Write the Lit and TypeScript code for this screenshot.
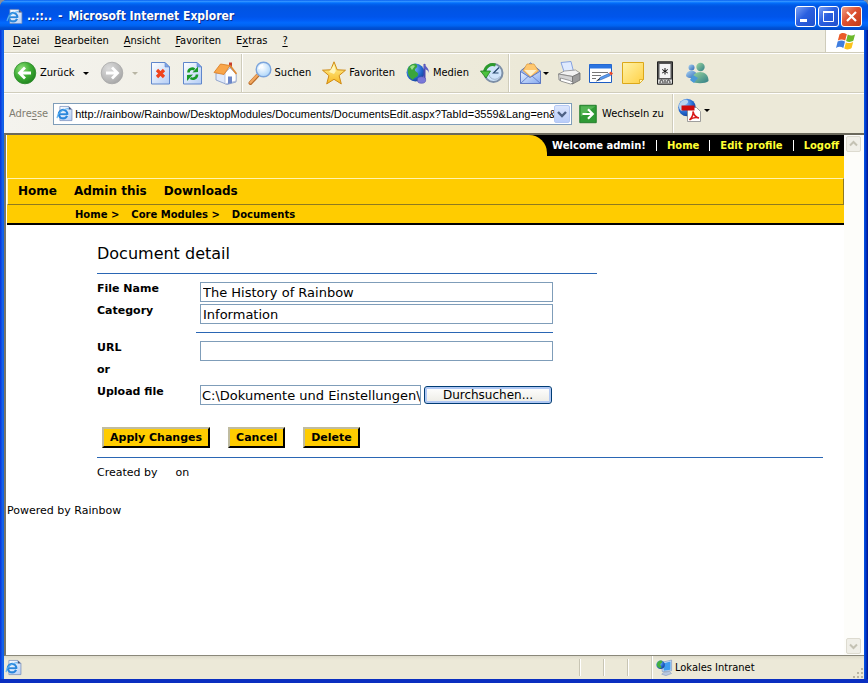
import { LitElement, html, css, svg } from "lit";
import { customElement } from "lit/decorators.js";

const PAGE_URL =
  "http://rainbow/Rainbow/DesktopModules/Documents/DocumentsEdit.aspx?TabId=3559&Lang=en&";
const LOCAL_PATH = "C:\\Dokumente und Einstellungen\\Admin\\history.doc";

const defs = svg`
  <linearGradient id="paper" x1="0" y1="0" x2="1" y2="1"><stop offset="0" stop-color="#fff"/><stop offset="1" stop-color="#b4cdf5"/></linearGradient>
  <radialGradient id="green" cx=".35" cy=".3" r=".8"><stop offset="0" stop-color="#8fe07a"/><stop offset=".5" stop-color="#3fae35"/><stop offset="1" stop-color="#1c7d1c"/></radialGradient>
  <radialGradient id="grey" cx=".35" cy=".3" r=".8"><stop offset="0" stop-color="#dcdcdc"/><stop offset=".6" stop-color="#bcbcbc"/><stop offset="1" stop-color="#a2a2a2"/></radialGradient>
  <linearGradient id="gold" x1="0" y1="0" x2="0" y2="1"><stop offset="0" stop-color="#fff7a0"/><stop offset="1" stop-color="#f8b820"/></linearGradient>
  <linearGradient id="note" x1="0" y1="0" x2="1" y2="1"><stop offset="0" stop-color="#fff3a8"/><stop offset="1" stop-color="#ffd044"/></linearGradient>
  <radialGradient id="glass" cx=".4" cy=".35" r=".7"><stop offset="0" stop-color="#fff"/><stop offset="1" stop-color="#a9d4fa"/></radialGradient>
  <radialGradient id="sea" cx=".35" cy=".3" r=".8"><stop offset="0" stop-color="#8cc6ff"/><stop offset=".6" stop-color="#2468d0"/><stop offset="1" stop-color="#123a8c"/></radialGradient>
  <linearGradient id="env" x1="0" y1="0" x2="1" y2="1"><stop offset="0" stop-color="#e8f2ff"/><stop offset="1" stop-color="#86aaf0"/></linearGradient>
  <linearGradient id="bud" x1="0" y1="0" x2="1" y2="1"><stop offset="0" stop-color="#9fd9a0"/><stop offset="1" stop-color="#2f7d86"/></linearGradient>
  <linearGradient id="bud2" x1="0" y1="0" x2="1" y2="1"><stop offset="0" stop-color="#a8d4f4"/><stop offset="1" stop-color="#2f66b4"/></linearGradient>`;

const shapes = {
  back: svg`<circle cx="12" cy="12" r="10.8" fill="url(#green)" stroke="#2c8a2a" stroke-width=".8"/><path d="M18 12H7.5M12 6.5 6.5 12l5.5 5.5" fill="none" stroke="#fff" stroke-width="2.8"/>`,
  forward: svg`<circle cx="12" cy="12" r="10.8" fill="url(#grey)" stroke="#a8a8a8" stroke-width=".8"/><path d="M6 12h10.5M12 6.5l5.5 5.5-5.5 5.5" fill="none" stroke="#fff" stroke-width="2.8"/>`,
  stop: svg`<path d="M2.5 1.5H16l4.5 4.5v17h-18z" fill="url(#paper)" stroke="#5f86cc"/><path d="M16 1.5V6h4.5z" fill="#7ea4e6" stroke="#5f86cc" stroke-width=".6"/><path d="m8 9 7 7M15 9l-7 7" stroke="#f0421c" stroke-width="3.2"/>`,
  refresh: svg`<path d="M2.5 1.5H16l4.5 4.5v17h-18z" fill="url(#paper)" stroke="#5f86cc"/><path d="M16 1.5V6h4.5z" fill="#7ea4e6" stroke="#5f86cc" stroke-width=".6"/><path d="M7.5 11.5c0-4 4-4.500 6-3" fill="none" stroke="#1a9a28" stroke-width="2.6"/><path d="m11.5 11.500 5.500-.5V5.500z" fill="#1a9a28"/><path d="M16 13.500c0 4-4 5-6.500 3.500" fill="none" stroke="#1a9a28" stroke-width="2.6"/><path d="M12 13.500 6 14v6z" fill="#1a9a28"/>`,
  home: svg`<path d="M16 1.5h3V7h-3z" fill="#c8402c"/><path d="m3 12 8-1 5-6 7 8.500V21l-9 2.500L3 19z" fill="#dfe9fb" stroke="#7f95c4" stroke-width=".8"/><path d="M12 12v11l11-3v-7l-6-6z" fill="#fff" stroke="#93a4cc" stroke-width=".6"/><path d="M1 11.500 7.500 3 17 4.500 11 13.500z" fill="#f9a64a" stroke="#d87a20" stroke-width=".8"/><path d="m17 4.500 6.500 8.500" stroke="#e08a30" stroke-width="1.8"/><path d="M15 15.500h4V22l-4 1z" fill="#6b86c8"/>`,
  search: svg`<path d="m9.500 14.500-7 7.500" stroke="#b86a28" stroke-width="4" stroke-linecap="round"/><path d="m9.500 14-7 7.500" stroke="#f2a860" stroke-width="2.4" stroke-linecap="round"/><circle cx="15.5" cy="8.5" r="7.3" fill="url(#glass)" stroke="#7ba4dc" stroke-width="1.4"/><path d="M11 8a5 5 0 0 1 4-4" fill="none" stroke="#fff" stroke-width="1.5"/>`,
  star: svg`<path d="m12 .8 3.2 8 8.3.4-6.4 5.400 2.200 8.300L12 18.300l-7.300 4.600 2.200-8.300L.5 9.200l8.300-.4z" fill="url(#gold)" stroke="#cf8a14"/><path d="m12 4 1.800 6-1.800 3-5-2z" fill="#fffbd0" opacity=".8"/>`,
  media: svg`<circle cx="9.5" cy="11.5" r="9" fill="url(#sea)"/><path d="M2 7c3-5 8-5 9-3 1 3-2 3-2 5s4 2 3 5-4 2-5 5C3 17 1 12 2 7z" fill="#3aa53c"/><path d="M4 6c2-2 4-2 5-1L6 9z" fill="#9be08a"/><path d="M18.500 3v15" stroke="#4a4ab0" stroke-width="2"/><path d="M18 2c1 4 5 4 5 10-1-3-3-4-5-4z" fill="#5d5dc4"/><ellipse cx="15.5" cy="19" rx="4.2" ry="3.3" fill="#7a78d8" stroke="#4a4ab0" stroke-width=".6"/>`,
  history: svg`<circle cx="13.5" cy="12" r="9" fill="#cfe4fa" stroke="#7d8fa6" stroke-width="2"/><path d="M19 6.500 13.500 12h5" fill="none" stroke="#27496e" stroke-width="1.2"/><path d="M20.500 15c-3 5-10 4-11.500-1" fill="none" stroke="#9fb4cc"/><path d="M4.500 11c1-6 6-8.500 11-7" fill="none" stroke="#2c9a2c" stroke-width="3"/><path d="M.5 10h10L6 17z" fill="#4cc23e" stroke="#207a20" stroke-width=".8"/>`,
  mail: svg`<path d="m1.500 10 10-8 10 8v12h-20z" fill="#9db8ee" stroke="#5874c0"/><path d="M4 9.500 8 3h7l4.500 7-8 6z" fill="#ffc870" stroke="#d89a40" stroke-width=".7"/><path d="M5.500 9h12l-6 6z" fill="#fff0c8"/><path d="m1.500 10.500 9.500 6 10.500-6.500v12.500h-20z" fill="url(#env)" stroke="#5874c0" stroke-width=".9"/><path d="m1.500 22.500 8-7.500M21.500 22.500 13 15" stroke="#5874c0" stroke-width=".8"/>`,
  printer: svg`<path d="m4 1.500 10-1 2.500 10-9 1.500z" fill="#dfeaff" stroke="#7c9ade" stroke-width=".9"/><path d="m1.500 13 6-3 11-1 4.500 3-7 3.500z" fill="#f2f2f2" stroke="#8c8c8c" stroke-width=".8"/><path d="m1.500 13 14 2.500V23L2 19z" fill="#d4d4d4" stroke="#808080" stroke-width=".8"/><path d="M15.500 15.500 23 12v7l-7.500 4z" fill="#9c9c9c" stroke="#707070" stroke-width=".8"/><path d="m3.500 17 9 2.500 4 2-3 1.500-10-3z" fill="#fff" stroke="#777" stroke-width=".7"/>`,
  edit: svg`<path d="M.5 3.500h22v18H.5z" fill="#fff" stroke="#1c5cc4"/><path d="M.5 3.500h22v4H.5z" fill="#2b74e0"/><path d="M3 11.500h16M3 14.500h9M3 17.500h4" stroke="#777"/><path d="m9 19.500 2-3 9-4 1.500 2-9 4z" fill="#5a9cf0" stroke="#2458a8" stroke-width=".6"/><path d="m20 12 2-1.500 2 2-2 2z" fill="#e8482c"/><path d="m7.500 20 3.500-2.500" stroke="#333"/>`,
  note: svg`<path d="M1.500 1.500h21v17l-4 4h-17z" fill="url(#note)" stroke="#dca818"/><path d="M22.500 18.500h-4v4z" fill="#fff6c0" stroke="#dca818" stroke-width=".8"/>`,
  palm: svg`<path d="M4.500.8h15v22.400h-15z" fill="#555" stroke="#222"/><path d="M6.500 3h11v14h-11z" fill="#f4f4f4"/><path d="M12 7v6.500M9.200 8.500l5.600 3.500M14.800 8.500 9.200 12" stroke="#111"/><path d="M5 18.500h14v4H5z" fill="#d8d8d8"/><path d="M7 22c0-4 3-4 3 0M14 22c0-4 3-4 3 0M12 19v3" stroke="#333" fill="none"/>`,
  buddies: svg`<circle cx="6.5" cy="6.5" r="3" fill="url(#bud2)"/><path d="M1 15c0-7 11-7 11 0-2 3-9 3-11 0z" fill="url(#bud2)"/><circle cx="15.5" cy="6" r="4.2" fill="url(#bud)"/><path d="M6.500 20c0-12 17.500-12 17 0-3 3-14 3-17 0z" fill="url(#bud)"/><path d="m8 14-3 5 4 3 4-5z" fill="#4a98d8"/>`,
  go: svg`<path d="M3 2.500h18v19H3z" fill="#2f9a35" stroke="#1e7a26"/><path d="M4 3.500h16L4 15z" fill="#6cc66a" opacity=".6"/><path d="M6 12h10.500M12 6.800l5.200 5.200-5.200 5.200" fill="none" stroke="#fff" stroke-width="2.4"/>`,
  pdf: svg`<circle cx="10" cy="9.5" r="8.8" fill="url(#sea)"/><path d="M3 5c3-4 7-4 8-2s-3 4-5 5 1 4-1 5c-3-1-4-5-2-8z" fill="#b8d4ee"/><path d="M10.500 9.500h9l4 4v10h-13z" fill="#fff" stroke="#888" stroke-width=".8"/><path d="M4.500 7.500h13v5h-13z" fill="#cf0a0a"/><path d="M12.500 22c3-3 4-5 3.500-8.500 1 4 3 6 6 6.500-4-1-7 0-9.500 2z" fill="none" stroke="#d81818" stroke-width="1.5"/>`,
  page: svg`<path d="M5.500 2H18l4.500 4.500V22h-17z" fill="url(#paper)" stroke="#7088b8"/><path d="M18 2v4.500h4.500z" fill="#44547c"/><ellipse cx="10" cy="13" rx="6" ry="6" fill="none" stroke="#2a86dc" stroke-width="3.2"/><path d="M5 13h10.500" stroke="#2a86dc" stroke-width="2.6"/><path d="M13 15.500h5v-2z" fill="#e4eefc"/><path d="M1.500 18.500C2 11 12 4 18 5.500" fill="none" stroke="#5ab0f0" stroke-width="1.6"/>`,
  flag: svg`<path d="M6 4.500c3-2 5-1.500 8 0l-1.800 7c-3-1.500-5-1.500-8 0z" fill="#ea5a28"/><path d="M15 5c3 1.500 5 1.500 8-.5l-1.800 7c-3 2-5 2-8 .5z" fill="#6cb82c"/><path d="M4 12.500c3-1.500 5-1.500 8 0l-1.800 7c-3-1.500-5-1.500-8 0z" fill="#3f7ee0"/><path d="M13 13.500c3 1.300 5 1 8-.8l-1.800 7c-3 2-5 2-8 .5z" fill="#fbc21c"/>`,
  intranet: svg`<path d="M7 5 22 1.500v15L9 18z" fill="#cfe0f4" stroke="#6a88b8" stroke-width=".8"/><path d="m9.500 6.500 11-3v11.500L11 16.500z" fill="#3f9cf0"/><path d="m11 19 8-1.500 3 3-8 3-6-2z" fill="#b8c8e0" stroke="#7088b0" stroke-width=".6"/><circle cx="6.5" cy="8" r="6" fill="url(#sea)"/><path d="M2 5c3-4 7-3 7-1s-3 2-3 4 3 3 1 5C2 13 0 9 2 5z" fill="#44b040"/>`,
};

const icon = (name: keyof typeof shapes, cls = "") =>
  html`<svg class="icon ${cls}" viewBox="0 0 24 24" aria-hidden="true">${defs}${shapes[name]}</svg>`;
const caret = html`<i class="caret"></i>`;

@customElement("app-root")
export class AppRoot extends LitElement {
  static styles = css`
    :host { display: block; background: #8a8f99; color: #000; font: 11px/14px "DejaVu Sans Condensed", "DejaVu Sans", sans-serif; }
    * { box-sizing: border-box; }
    button, input { font: inherit; color: inherit; margin: 0; border-radius: 0; }
    button { background: none; border: 0; padding: 0; white-space: nowrap; }
    a { color: inherit; text-decoration: none; }
    u { text-underline-offset: 2px; }
    .icon { display: block; width: 24px; height: 24px; flex: none; }
    .icon.small { width: 17px; height: 17px; }
    .icon.mid { width: 22px; height: 22px; }
    .window { display: flex; flex-direction: column; min-height: 100vh; padding: 0 4px 4px; border-radius: 7px 7px 0 0; background: linear-gradient(to right, #0831d9, #166aee 3px, #0855dd 4px, #0855dd calc(100% - 4px), #0048e0 calc(100% - 3px), #00138c); box-shadow: inset 0 -4px #0a2fc0; }
    .title { display: flex; align-items: center; height: 30px; margin: 0 -4px; padding: 2px 6px 0; border-radius: 7px 7px 0 0; color: #fff; background: linear-gradient(#0058ee 0, #3593ff 4%, #288eff 6%, #127dff 8%, #036ffc 10%, #0262ee 14%, #0057e5 20%, #0054e3 24%, #0055eb 56%, #005bf5 66%, #026afe 76%, #0062ef 86%, #0052d6 92%, #0049c8 100%); }
    .title h1 { display: flex; gap: 6px; flex: 1; margin: 0 0 0 4px; font: bold 12px/16px "DejaVu Sans Condensed", "DejaVu Sans", sans-serif; text-shadow: 1px 1px #0a2f8c; white-space: nowrap; }
    .caption { display: flex; gap: 2px; }
    .caption button { width: 21px; height: 21px; border: 1px solid #fff; border-radius: 3px; background: linear-gradient(135deg, #7ba0f4, #2a5fe0 45%, #1f50cc); }
    .caption .close { background: linear-gradient(135deg, #f0a088, #dd5030 45%, #c03c18); }
    .caption svg { display: block; width: 19px; height: 19px; }
    .menu { display: flex; height: 23px; background: #eeecdf; border-bottom: 1px solid #cfccbb; }
    .menu nav { display: flex; flex: 1; align-items: center; gap: 15px; padding-left: 9px; }
    .brand { display: grid; place-items: center; width: 39px; background: #fff; border-left: 1px solid #cfccbb; }
    .bar { display: flex; align-items: center; background: linear-gradient(to right, #f4f3ee, #ece9d8 60%); border-top: 1px solid #fff; }
    .tools { height: 40px; gap: 8px; padding-left: 9px; border-bottom: 1px solid #d0cdbc; }
    .tools button { display: flex; align-items: center; gap: 3px; }
    .tools .wide { padding-right: 3px; }
    .tools .travel { padding-right: 3px; }
    .travel .caret { margin-left: 5px; }
    .tools .drop { gap: 0; padding-left: 4px; }
    .sep { width: 1px; align-self: stretch; background: #cfccbb; box-shadow: 1px 0 #fff; }
    .tools .sep { margin: 0 -2px 0 -4px; }
    .caret { width: 0; height: 0; border: 3px solid transparent; border-top-color: #000; border-bottom: 0; }
    .off .caret { border-top-color: #b8b5a4; }
    .address { height: 40px; gap: 5px; padding-left: 5px; }
    .address label { color: #7f7c70; }
    .combo { display: flex; align-items: center; flex: 1; min-width: 0; height: 22px; padding: 1px 1px 1px 2px; background: #fff; border: 1px solid #7f9db9; }
    .combo input { flex: 1; min-width: 0; border: 0; padding: 0 0 0 2px; outline: 0; background: none; font-family: "Liberation Sans", sans-serif; }
    .combo button { flex: none; width: 16px; height: 18px; border: 1px solid #b4c8f4; border-radius: 2px; background: linear-gradient(#dce6fd, #b9cdf9); }
    .links { display: flex; align-items: center; align-self: stretch; width: 287px; }
    .links > button { display: flex; align-items: center; gap: 3px; }
    .links .sep { margin: 0 4px 0 8px; }
    .links .pdf { height: 32px; align-self: flex-start; }
    .view { display: flex; flex: 1; background: #fff; border: solid #777568; border-width: 2px 0 0 2px; border-top-color: #6b695c; border-bottom: 1px solid #8a887a; }
    .page { flex: 1; min-width: 0; padding-left: 1px; font: 11px/16px "DejaVu Sans", sans-serif; }
    .scroll { display: flex; flex-direction: column; justify-content: space-between; width: 20px; padding: 1px 2px; background: #fdfdfa; }
    .scroll button { width: 15px; height: 16px; border: 1px solid #dddbd0; border-radius: 2px; background: #f0efe8; }
    .banner { display: flex; justify-content: flex-end; height: 43px; background: #fc0; }
    .edge { height: 21px; background: #000; }
    .corner { width: 18px; height: 21px; background: #fc0; border-radius: 0 18px 0 0; }
    .user { display: flex; align-items: center; height: 21px; gap: 10px; padding: 0 5px; background: #000; color: #fff; font-weight: bold; font-size: 10px; white-space: nowrap; }
    .user a { color: #ff3; }
    .user i { width: 1px; height: 11px; background: #fff; }
    .tabs { display: flex; gap: 17px; height: 27px; padding: 0 10px 2px; align-items: center; background: #fc0; border: 1px solid; border-color: #fff3b0 #8f7a20 #8f7a20 #fff3b0; font-weight: bold; font-size: 12px; }
    .crumbs { display: flex; gap: 12px; align-items: flex-end; height: 20px; padding-left: 68px; background: #fc0; border-bottom: 2px solid #000; font-weight: bold; font-size: 10px; }
    .detail { padding: 19px 21px 0 90px; }
    h2 { margin: 0; font: 16px/20px "DejaVu Sans", sans-serif; }
    hr { margin: 0; border: 0; height: 1px; background: #2a66b4; }
    .short { max-width: 500px; margin: 9px 0 7px; }
    .form { display: grid; grid-template-columns: 103px minmax(0, 353px); grid-auto-rows: 22px; }
    .form label, .form b { font-weight: bold; }
    .form input { width: 100%; min-width: 0; height: 20px; margin-top: 1px; padding: 0 2px; border: 1px solid #7f9db9; background: #fff; font-size: 13px; }
    .rule { max-width: 456px; height: 15px; padding: 7px 0 0 99px; }
    .file { display: flex; gap: 3px; }
    .form .file input { padding: 0 0 0 1px; }
    .browse { flex: none; width: 128px; height: 18px; margin-top: 2px; margin-right: 1px; border: 1px solid #003c74; border-radius: 3px; background: linear-gradient(#fff, #ecebe4); box-shadow: inset 0 0 0 2px #b0c8f4; font-size: 12px; line-height: 14px; }
    .actions { display: flex; gap: 18px; padding: 21px 5px 9px; }
    .actions button { height: 21px; padding: 0 6px; background: #fc0; border: 2px solid; border-color: #c0bca0 #000 #000 #c0bca0; font-weight: bold; }
    .meta { display: flex; gap: 18px; margin: 7px 0 0; }
    .foot { margin: 22px 0 0; }
    .status { display: flex; align-items: center; height: 23px; padding-left: 1px; background: linear-gradient(#dedbcb, #ece9d8 4px); }
    .status .gap { flex: 1; }
    .cell { width: 24px; height: 17px; border-left: 1px solid #c8c5b4; box-shadow: inset 1px 0 #fff; }
    .zone { display: flex; align-items: center; gap: 2px; width: 182px; padding-left: 4px; }
    .grip { align-self: flex-end; width: 12px; height: 12px; margin-left: 18px; }
  `;

  render() {
    return html`
      <main class="window">
        <header class="title">
          ${icon("page", "small")}
          <h1><span>..::..</span><span>-</span><span>Microsoft Internet Explorer</span></h1>
          <div class="caption">
            <button aria-label="Minimieren"><svg viewBox="0 0 19 19"><path d="M4 12h7v3H4z" fill="#fff"/></svg></button>
            <button aria-label="Maximieren"><svg viewBox="0 0 19 19"><path d="M4.5 5h10v9.5h-10z" fill="none" stroke="#fff"/><path d="M4 4h11v2H4z" fill="#fff"/></svg></button>
            <button class="close" aria-label="Schließen"><svg viewBox="0 0 19 19"><path d="m5 5 9 9M14 5l-9 9" stroke="#fff" stroke-width="2.2"/></svg></button>
          </div>
        </header>
        <div class="menu">
          <nav>
            <button><u>D</u>atei</button><button><u>B</u>earbeiten</button><button><u>A</u>nsicht</button>
            <button><u>F</u>avoriten</button><button>E<u>x</u>tras</button><button><u>?</u></button>
          </nav>
          <div class="brand">${icon("flag", "mid")}</div>
        </div>
        <div class="bar tools">
          <button class="travel">${icon("back")}Zurück${caret}</button>
          <button class="travel off" aria-label="Vorwärts">${icon("forward")}${caret}</button>
          <button aria-label="Abbrechen">${icon("stop")}</button>
          <button aria-label="Aktualisieren">${icon("refresh")}</button>
          <button aria-label="Startseite">${icon("home")}</button>
          <i class="sep"></i>
          <button class="wide">${icon("search")}Suchen</button>
          <button class="wide">${icon("star")}Favoriten</button>
          <button class="wide">${icon("media")}Medien</button>
          <button aria-label="Verlauf">${icon("history")}</button>
          <i class="sep"></i>
          <button class="drop" aria-label="E-Mail">${icon("mail")}${caret}</button>
          <button aria-label="Drucken">${icon("printer")}</button>
          <button aria-label="Bearbeiten">${icon("edit")}</button>
          <button aria-label="Diskussion">${icon("note")}</button>
          <button aria-label="Handheld">${icon("palm")}</button>
          <button aria-label="Messenger">${icon("buddies")}</button>
        </div>
        <div class="bar address">
          <label for="url">Adre<u>s</u>se</label>
          <div class="combo">
            ${icon("page", "small")}<input id="url" .value=${PAGE_URL} />
            <button aria-label="Liste"><svg viewBox="0 0 14 16"><path d="m3 6 4 4 4-4" fill="none" stroke="#4d6185" stroke-width="2.4"/></svg></button>
          </div>
          <div class="links">
            <button>${icon("go", "mid")}Wechseln zu</button><i class="sep"></i>
            <button class="pdf" aria-label="PDF">${icon("pdf")}${caret}</button>
          </div>
        </div>
        <section class="view">
          <article class="page">
            <div class="banner">
              <div class="edge"><div class="corner"></div></div>
              <div class="user">Welcome admin!<i></i><a href="#">Home</a><i></i><a href="#">Edit profile</a><i></i><a href="#">Logoff</a></div>
            </div>
            <nav class="tabs"><a href="#">Home</a><a href="#">Admin this</a><a href="#">Downloads</a></nav>
            <nav class="crumbs"><a href="#">Home &gt;</a><a href="#">Core Modules &gt;</a><a href="#">Documents</a></nav>
            <div class="detail">
              <h2>Document detail</h2>
              <hr class="short" />
              <div class="form">
                <label for="name">File Name</label><input id="name" value="The History of Rainbow" />
                <label for="cat">Category</label><input id="cat" value="Information" />
              </div>
              <div class="rule"><hr /></div>
              <div class="form">
                <label for="link">URL</label><input id="link" />
                <b>or</b><span></span>
                <label for="path">Upload file</label>
                <div class="file"><input id="path" .value=${LOCAL_PATH} /><button class="browse">Durchsuchen...</button></div>
              </div>
              <div class="actions"><button>Apply Changes</button><button>Cancel</button><button>Delete</button></div>
              <hr />
              <p class="meta"><span>Created by</span><span>on</span></p>
            </div>
            <p class="foot">Powered by Rainbow</p>
          </article>
          <div class="scroll">
            <button aria-label="Nach oben"><svg viewBox="0 0 13 14"><path d="m3 8.5 3.5-3.5L10 8.5" fill="none" stroke="#c4c2b4" stroke-width="2"/></svg></button>
            <button aria-label="Nach unten"><svg viewBox="0 0 13 14"><path d="m3 5.5 3.5 3.5L10 5.5" fill="none" stroke="#c4c2b4" stroke-width="2"/></svg></button>
          </div>
        </section>
        <footer class="status">
          ${icon("page", "small")}<span class="gap"></span>
          <i class="cell"></i><i class="cell"></i><i class="cell"></i><i class="sep"></i>
          <div class="zone">${icon("intranet", "small")}Lokales Intranet</div>
          <svg class="grip" viewBox="0 0 12 12"><path d="M9 1h2v2H9zM5 5h2v2H5zM9 5h2v2H9zM1 9h2v2H1zM5 9h2v2H5zM9 9h2v2H9z" fill="#b8b4a2"/></svg>
        </footer>
      </main>`;
  }
}
